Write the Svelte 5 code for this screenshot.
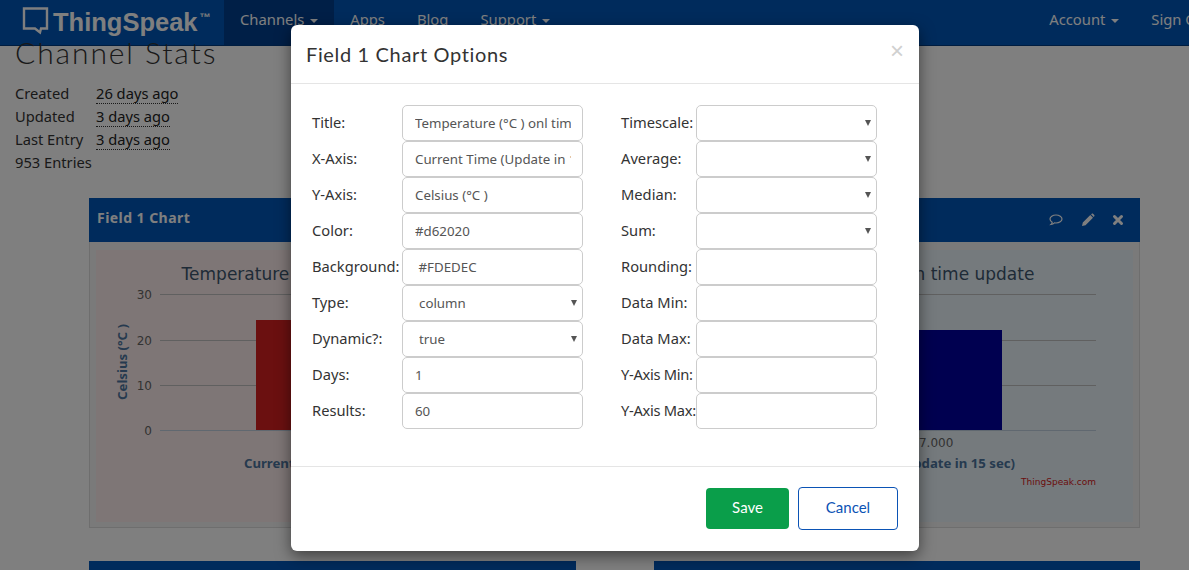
<script>
  const stats = [
    ["Created", "26 days ago"],
    ["Updated", "3 days ago"],
    ["Last Entry", "3 days ago"]
  ];
  const left = [
    { label: "Title:", value: "Temperature (°C ) onl time update" },
    { label: "X-Axis:", value: "Current Time (Update in 15 sec)" },
    { label: "Y-Axis:", value: "Celsius (°C )" },
    { label: "Color:", value: "#d62020" },
    { label: "Background:", value: " #FDEDEC" },
    { label: "Type:", options: ["column"] },
    { label: "Dynamic?:", options: ["true"] },
    { label: "Days:", value: "1" },
    { label: "Results:", value: "60" }
  ];
  const right = [
    { label: "Timescale:", options: [""] },
    { label: "Average:", options: [""] },
    { label: "Median:", options: [""] },
    { label: "Sum:", options: [""] },
    { label: "Rounding:", value: "" },
    { label: "Data Min:", value: "" },
    { label: "Data Max:", value: "" },
    { label: "Y-Axis Min:", value: "", tight: true },
    { label: "Y-Axis Max:", value: "", tight: true }
  ];
  const ticks = [[30, 44], [20, 90], [10, 135], [0, 180]];
</script>

{#snippet field(f)}
  <div class="row">
    <label class:tight={f.tight}>{f.label}</label>
    {#if f.options}
      <div class="sel">
        <select>
          {#each f.options as o}<option>{o}</option>{/each}
        </select>
      </div>
    {:else}
      <input value={f.value} />
    {/if}
  </div>
{/snippet}

{#snippet chart(bg, barColor, barTop, barW)}
  <svg class="chart" viewBox="0 0 472 272" style="background: {bg}">
    <text x="229.500" y="30" text-anchor="middle" class="ctitle">Temperature (°C ) on time update</text>
    {#each ticks as [v, y]}
      <line x1="64" x2="435" y1={y + 0.5} y2={y + 0.5} stroke={v === 0 ? "#C0D0E0" : "#C0C0C0"} />
      <text x="56" y={y + 5} text-anchor="end" class="tick">{v}</text>
    {/each}
    <text transform="translate(31 112) rotate(-90)" text-anchor="middle" class="ytitle">Celsius (°C )</text>
    <rect x="160" y={barTop} width={barW} height={180 - barTop} fill={barColor} />
    <text x="252" y="197" text-anchor="middle" class="tick">20:51:17.000</text>
    <text x="251" y="218" text-anchor="middle" class="xtitle">Current Time (Update in 15 sec)</text>
    <text x="435" y="235" text-anchor="end" class="credit">ThingSpeak.com</text>
  </svg>
{/snippet}

<div class="page">
  <nav class="navbar">
    <div class="brand">
      <svg width="28" height="34" viewBox="0 0 28 34">
        <path d="M2 2.500h23v20h-6l-1 4-5-4H2z" fill="none" stroke="currentColor" stroke-width="2.400" />
      </svg>
      <span class="brand-name">ThingSpeak</span><span class="tm">™</span>
    </div>
    <ul class="links">
      <li class="active">Channels <i class="caret"></i></li>
      <li>Apps</li>
      <li>Blog</li>
      <li>Support <i class="caret"></i></li>
    </ul>
    <ul class="links links-right">
      <li>Account <i class="caret"></i></li>
      <li>Sign Out</li>
    </ul>
  </nav>

  <main>
    <h1>Channel Stats</h1>
    <div class="stats">
      {#each stats as [k, v]}
        <div class="stat"><span class="k">{k}</span><abbr>{v}</abbr></div>
      {/each}
      <div class="stat">953 Entries</div>
    </div>

    <div class="panels">
      <section class="panel">
        <header>Field 1 Chart</header>
        <div class="panel-body">
          {@render chart("#FDEDEC", "#d62020", 70, 200)}
        </div>
      </section>
      <section class="panel">
        <header>
          Field 2 Chart
          <span class="tools">
            <svg class="chat" width="14" height="14" viewBox="0 0 14 14"><path d="M7 2C3.700 2 1 3.700 1 6c0 1.300.9 2.400 2.200 3.200-.1.900-.5 1.700-1.200 2.300 1.300-.1 2.600-.7 3.500-1.600.5.100 1 .1 1.500.1 3.300 0 6-1.800 6-4S10.300 2 7 2z" fill="none" stroke="currentColor" stroke-width="1.200" /></svg>
            <svg width="14" height="14" viewBox="0 0 14 14"><path d="M1 13l.8-3.500L9.300 2l2.700 2.700-7.500 7.500zM10 1.300l.8-.6c.4-.3.900-.3 1.200 0l1.300 1.300c.3.300.3.800 0 1.200l-.6.800z" fill="currentColor" /></svg>
            <svg width="14" height="14" viewBox="0 0 14 14"><path d="M3.500 3.500l7 7M10.500 3.500l-7 7" stroke="currentColor" stroke-width="3" stroke-linecap="round" /></svg>
          </span>
        </header>
        <div class="panel-body">
          {@render chart("#EBF5FB", "#0000a0", 80, 181)}
        </div>
      </section>
    </div>

    <div class="panels second">
      <section class="panel"><header></header></section>
      <section class="panel"><header></header></section>
    </div>
  </main>

  <div class="backdrop"></div>

  <div class="modal">
    <div class="modal-header">
      <h4>Field 1 Chart Options</h4>
      <span class="close">×</span>
    </div>
    <div class="modal-body">
      <div class="col col-left">
        {#each left as f}{@render field(f)}{/each}
      </div>
      <div class="col col-right">
        {#each right as f}{@render field(f)}{/each}
      </div>
    </div>
    <div class="modal-footer">
      <button class="btn save">Save</button>
      <button class="btn cancel">Cancel</button>
    </div>
  </div>
</div>

<style>
  :global(body) {
    margin: 0;
    background: #fff;
  }
  .page {
    position: relative;
    width: 1189px;
    height: 570px;
    overflow: hidden;
    font-family: "Noto Sans", sans-serif;
    color: #333;
  }
  .navbar {
    display: flex;
    height: 45px;
    background: #0056b8;
    border-bottom: 1px solid #003a80;
    color: #fff;
    white-space: nowrap;
  }
  .brand {
    display: flex;
    align-items: center;
    width: 224px;
    padding-left: 22px;
    box-sizing: border-box;
    flex-shrink: 0;
  }
  .brand-name {
    font: bold 25.500px "Liberation Sans", sans-serif;
    margin-left: 3px;
  }
  .tm {
    font: bold 11px "Liberation Sans", sans-serif;
    margin: -12px 0 0 2px;
  }
  .links {
    display: flex;
    list-style: none;
    margin: 0;
    padding: 0;
    font-size: 14.800px;
    line-height: 38px;
    flex-shrink: 0;
  }
  .links li {
    padding: 0 16px;
  }
  .links .active {
    background: #003f8f;
  }
  .links-right {
    margin-left: 467px;
  }
  .caret {
    display: inline-block;
    vertical-align: middle;
    margin-left: 2px;
    border-top: 4px solid;
    border-left: 4px solid transparent;
    border-right: 4px solid transparent;
  }
  main {
    padding: 0 0 0 15px;
  }
  h1 {
    margin: -12px 0 0;
    font: 300 30px/36px Lato, sans-serif;
    letter-spacing: 1.900px;
  }
  .stats {
    margin-top: 12px;
    font-size: 14.700px;
    line-height: 23px;
  }
  .k {
    display: inline-block;
    width: 81px;
  }
  abbr {
    border-bottom: 1px dotted #333;
    color: #222;
  }
  .panels {
    display: flex;
    gap: 78px;
    margin: 24px 0 0 74px;
    width: 1051px;
  }
  .panels.second {
    margin-top: 33px;
  }
  .panel {
    width: 486px;
    background: #f5f5f5;
    border: 1px solid #ddd;
    box-sizing: border-box;
  }
  .panel:first-child {
    width: 487px;
  }
  .panel header {
    display: flex;
    align-items: center;
    justify-content: space-between;
    box-sizing: border-box;
    height: 44px;
    margin: -1px -1px 0;
    padding: 0 15px 6px 8px;
    background: #0056b8;
    color: #fff;
    font: bold 14px "Noto Sans", sans-serif;
    letter-spacing: 0.450px;
  }
  .tools {
    display: flex;
    gap: 16px;
    margin-top: 6px;
  }
  .chat {
    margin-right: 2px;
  }
  .panel-body {
    padding: 8px 6px 5px;
  }
  .chart {
    display: block;
    width: 472px;
    height: 272px;
  }
  .ctitle {
    font: 17px "DejaVu Sans", sans-serif;
    fill: #3e576f;
  }
  .tick {
    font: 12px "DejaVu Sans", sans-serif;
    fill: #666;
  }
  .ytitle,
  .xtitle {
    font: bold 13.200px "Noto Sans", sans-serif;
    fill: #4d759e;
  }
  .credit {
    font: 9px "DejaVu Sans", sans-serif;
    fill: #d62020;
  }
  .backdrop {
    position: absolute;
    inset: 0;
    background: rgba(0, 0, 0, 0.5);
  }
  .modal {
    position: absolute;
    left: 291px;
    top: 25px;
    width: 628px;
    height: 526px;
    background: #fff;
    border-radius: 6px;
    box-shadow: 0 5px 15px rgba(0, 0, 0, 0.5);
    display: flex;
    flex-direction: column;
  }
  .modal-header {
    height: 59px;
    box-sizing: border-box;
    flex-shrink: 0;
    display: flex;
    align-items: center;
    justify-content: space-between;
    padding: 0 15px;
    border-bottom: 1px solid #e5e5e5;
  }
  h4 {
    margin: 0;
    font: 400 20px Lato, sans-serif;
    letter-spacing: 0.650px;
    color: #333;
  }
  .close {
    font: 400 24px "Liberation Sans", sans-serif;
    color: #d0d0d0;
    margin: -6px 0 0;
  }
  .modal-body {
    display: flex;
    gap: 38px;
    padding: 21px 0 37px 21px;
    box-sizing: border-box;
    height: 382px;
  }
  .col {
    display: flex;
    flex-direction: column;
  }
  .row {
    display: flex;
    align-items: center;
    height: 36px;
  }
  label {
    font-size: 14.700px;
    color: #333;
    flex-shrink: 0;
    white-space: nowrap;
    padding-bottom: 2px;
  }
  label.tight {
    letter-spacing: -0.300px;
  }
  .col-left label {
    width: 90px;
  }
  .col-right label {
    width: 75px;
  }
  input,
  select {
    width: 181px;
    height: 36px;
    box-sizing: border-box;
    border: 1px solid #ccc;
    border-radius: 5px;
    background: #fff;
    padding: 0 11px 0 12px;
    font: 13.300px "Noto Sans", sans-serif;
    color: #555;
    outline: none;
  }
  select {
    appearance: none;
    padding-left: 16px;
  }
  .sel {
    position: relative;
    height: 36px;
  }
  .sel::after {
    content: "";
    position: absolute;
    right: 6px;
    top: 15px;
    border-top: 6px solid #555;
    border-left: 3px solid transparent;
    border-right: 3px solid transparent;
  }
  .modal-footer {
    flex: 1;
    display: flex;
    justify-content: flex-end;
    align-items: center;
    gap: 9px;
    padding: 0 21px 2px 0;
    border-top: 1px solid #e5e5e5;
  }
  .btn {
    font: 15px Lato, sans-serif;
    border-radius: 4px;
    cursor: pointer;
    padding: 0 0 2px;
  }
  .save {
    width: 83px;
    height: 41px;
    background: #0a9e4a;
    color: #fff;
    border: 0;
  }
  .cancel {
    width: 100px;
    height: 43px;
    background: #fff;
    color: #0b53b5;
    border: 1px solid #0b53b5;
  }
</style>
